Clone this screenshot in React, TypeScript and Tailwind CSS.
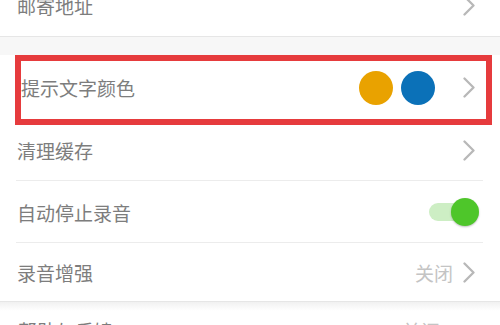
import React from "react";

const Chevron = () => (
  <svg width="12" height="21" viewBox="0 0 12 21" className="shrink-0">
    <polyline
      points="1.5,1.5 10.5,10.5 1.5,19.5"
      fill="none"
      stroke="#b8b8b8"
      strokeWidth="2.3"
      strokeLinecap="round"
      strokeLinejoin="round"
    />
  </svg>
);

type RowProps = {
  label: string;
  height: string;
  divider?: boolean;
  padLeft?: string;
  children?: React.ReactNode;
};

const Row = ({ label, height, divider = true, padLeft = "pl-[17px]", children }: RowProps) => (
  <div className={`relative flex items-center ${height} ${padLeft} pr-[25px]`}>
    <span className="flex-1 text-[19px] leading-none text-[#7d7d7d]">{label}</span>
    <div className="flex items-center">{children}</div>
    {divider && <div className="absolute bottom-0 left-[16px] right-[17px] h-px bg-[#ececec]" />}
  </div>
);

export default function App() {
  return (
    <div
      className="relative w-[500px] h-[325px] overflow-hidden bg-white"
      style={{ fontFamily: '"Noto Sans CJK SC", "Noto Sans", sans-serif' }}
    >
      {/* first group, cut at the top */}
      <div className="-mt-[25px] border-b border-[#e6e6e6]">
        <Row label="邮寄地址" height="h-[61px]" divider={false}>
          <Chevron />
        </Row>
      </div>

      <div className="h-[18px] bg-[#f7f7f7]" />

      <div className="border-b border-[#e6e6e6]">
        <Row label="提示文字颜色" height="h-[65px]" padLeft="pl-[21px]" divider={false}>
          <div className="flex items-center gap-[8px] mr-[28px]">
            <span className="block w-[34px] h-[34px] rounded-full bg-[#e9a200]" />
            <span className="block w-[34px] h-[34px] rounded-full bg-[#0b71b8]" />
          </div>
          <Chevron />
        </Row>
        <Row label="清理缓存" height="h-[61px]">
          <Chevron />
        </Row>
        <Row label="自动停止录音" height="h-[62px]">
          <div className="relative w-[50px] h-[28px] -mr-[4px]">
            <div className="absolute left-0 top-[5px] w-[40px] h-[18px] rounded-full bg-[#cdeec4]" />
            <div className="absolute right-0 top-0 w-[28px] h-[28px] rounded-full bg-[#4ec62a] shadow-[0_1px_2px_rgba(0,0,0,0.25)]" />
          </div>
        </Row>
        <Row label="录音增强" height="h-[58px]" divider={false}>
          <span className="text-[19px] leading-none text-[#c4c4c4] mr-[10px]">关闭</span>
          <Chevron />
        </Row>
      </div>

      <div className="h-[9px] bg-gradient-to-b from-[#f1f1f1] to-white" />

      <div className="flex items-start justify-between pl-[18px] pr-[60px] pt-[10px]">
        <span className="text-[19px] leading-none text-[#7d7d7d]">帮助与反馈</span>
        <span className="text-[19px] leading-none text-[#c4c4c4]">关闭</span>
      </div>

      {/* highlight annotation */}
      <div className="absolute left-[15px] top-[55px] w-[477px] h-[70px] border-[6px] border-[#e63b3d]" />
    </div>
  );
}
